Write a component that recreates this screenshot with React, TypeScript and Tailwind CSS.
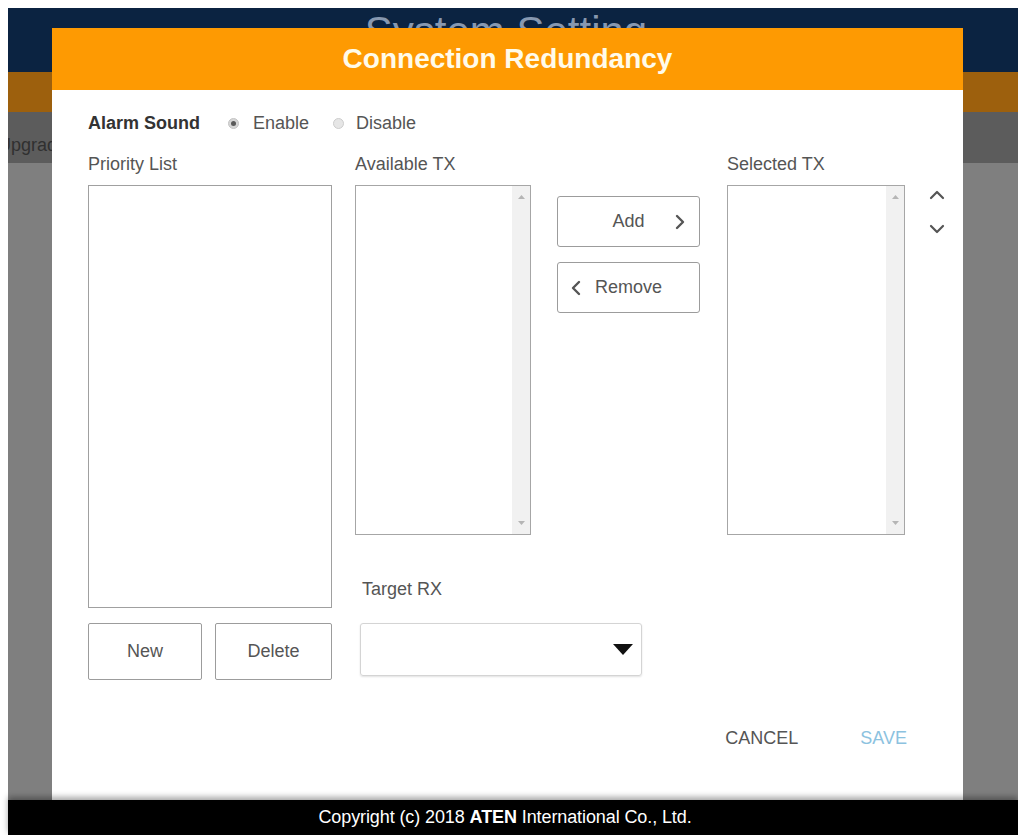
import { ChevronDown, ChevronLeft, ChevronRight, ChevronUp } from 'lucide-react';

type BoxProps = { className: string };

// plain list box, the kind with a native-looking scroll track on the right
const ScrollList = ({ className }: BoxProps) => (
  <div className={`flex border border-[#a6a6a6] bg-white ${className}`}>
    <div className="flex-1" />
    <div className="w-[18px] bg-[#f1f1f1] flex flex-col items-center justify-between py-[9px]">
      <svg width="7" height="4" viewBox="0 0 7 4">
        <path d="M0 4 L3.5 0 L7 4 Z" fill="#b5b5b5" />
      </svg>
      <svg width="7" height="4" viewBox="0 0 7 4">
        <path d="M0 0 L3.5 4 L7 0 Z" fill="#b5b5b5" />
      </svg>
    </div>
  </div>
);

const Radio = ({ checked }: { checked: boolean }) => (
  <span
    className={
      checked
        ? 'w-[11px] h-[11px] rounded-full bg-[#d6d6d6] border border-[#c4c4c4] flex items-center justify-center'
        : 'block w-[11px] h-[11px] rounded-full bg-[#e6e6e6] border border-[#cdcdcd]'
    }
  >
    {checked && <span className="w-[5px] h-[5px] rounded-full bg-[#5a5a5a]" />}
  </span>
);

const App = () => {
  return (
    <div className="relative w-[1018px] h-[835px] overflow-hidden bg-white pl-[8px] pt-[8px] flex flex-col font-['Liberation_Sans',Arial,sans-serif]">
      <div className="h-[64px] bg-[#0b2341] flex justify-center pt-[3px] pr-[14px]">
        <span className="text-[42px] leading-[42px] text-[#8798b0]">System Setting</span>
      </div>
      <div className="h-[40px] bg-[#9d600d]" />
      <div className="h-[51px] bg-[#5c5c5c] overflow-hidden pt-[23px]">
        <span className="block -ml-[10px] text-[18px] leading-[20px] text-[#303030]">Upgrade</span>
      </div>
      <div className="flex-1 bg-[#7f7f7f]" />
      <div className="relative z-10 h-[35px] bg-black flex items-center justify-center pr-[16px] shadow-[0_-3px_6px_rgba(0,0,0,0.35)]">
        <span className="text-[18px] text-white tracking-[-0.1px]">
          Copyright (c) 2018 <span className="font-bold">ATEN</span> International Co., Ltd.
        </span>
      </div>

      {/* Connection Redundancy dialog */}
      <div className="absolute left-[52px] top-[28px] w-[911px] h-[772px] bg-white flex flex-col">
        <div className="h-[62px] bg-[#fe9a02] flex items-center justify-center">
          <h1 className="text-[28px] font-bold text-[#fffbea]">Connection Redundancy</h1>
        </div>

        <div className="pl-[36px] pt-[23px] flex flex-col">
          <div className="h-[20px] flex items-center text-[18px]">
            <span className="font-bold text-[#333]">Alarm Sound</span>
            <span className="ml-[28px]">
              <Radio checked />
            </span>
            <span className="ml-[14px] text-[#555]">Enable</span>
            <span className="ml-[24px]">
              <Radio checked={false} />
            </span>
            <span className="ml-[12px] text-[#555]">Disable</span>
          </div>

          <div className="mt-[21px] flex">
            <div className="w-[244px] shrink-0 flex flex-col">
              <span className="h-[20px] leading-[20px] text-[18px] text-[#555]">Priority List</span>
              <div className="mt-[11px] h-[423px] border border-[#a0a0a0]" />
              <div className="mt-[15px] h-[57px] flex gap-[13px]">
                <button className="w-[114px] border border-[#9c9c9c] rounded-[2px] text-[18px] text-[#555]">
                  New
                </button>
                <button className="flex-1 border border-[#9c9c9c] rounded-[2px] text-[18px] text-[#555]">
                  Delete
                </button>
              </div>
            </div>

            <div className="ml-[23px] shrink-0 flex flex-col">
              <div className="flex">
                <div className="w-[176px] shrink-0 flex flex-col">
                  <span className="h-[20px] leading-[20px] text-[18px] text-[#555]">Available TX</span>
                  <ScrollList className="mt-[11px] h-[350px]" />
                </div>

                <div className="ml-[26px] w-[143px] shrink-0 pt-[42px] flex flex-col gap-[15px]">
                  <button className="relative h-[51px] border border-[#9c9c9c] rounded-[3px] text-[18px] text-[#555]">
                    Add
                    <ChevronRight className="absolute right-[7px] top-[13px] w-[24px] h-[24px] text-[#555]" strokeWidth={2.4} />
                  </button>
                  <button className="relative h-[51px] border border-[#9c9c9c] rounded-[3px] text-[18px] text-[#555]">
                    Remove
                    <ChevronLeft className="absolute left-[6px] top-[13px] w-[24px] h-[24px] text-[#555]" strokeWidth={2.4} />
                  </button>
                </div>

                <div className="ml-[27px] w-[178px] shrink-0 flex flex-col">
                  <span className="h-[20px] leading-[20px] text-[18px] text-[#555]">Selected TX</span>
                  <ScrollList className="mt-[11px] h-[350px]" />
                </div>

                <div className="ml-[20px] shrink-0 pt-[29px] flex flex-col gap-[10px] text-[#555]">
                  <ChevronUp className="w-[24px] h-[24px]" strokeWidth={2.2} />
                  <ChevronDown className="w-[24px] h-[24px]" strokeWidth={2.2} />
                </div>
              </div>

              <span className="mt-[44px] ml-[7px] h-[20px] leading-[20px] text-[18px] text-[#555]">Target RX</span>
              <div className="mt-[24px] ml-[5px] w-[282px] h-[53px] border border-[#d4d4d4] rounded-[3px] shadow-[0_1px_2px_rgba(0,0,0,0.12)] flex items-center justify-end pr-[8px]">
                <svg width="20" height="11" viewBox="0 0 20 11">
                  <path d="M0 0 H20 L10 11 Z" fill="#111" />
                </svg>
              </div>
            </div>
          </div>

          <div className="mt-[48px] h-[20px] flex justify-end items-center gap-[62px] pr-[56px] text-[18px]">
            <button className="text-[#555]">CANCEL</button>
            <button className="text-[#8cc2df]">SAVE</button>
          </div>
        </div>
      </div>
    </div>
  );
};

export default App;
